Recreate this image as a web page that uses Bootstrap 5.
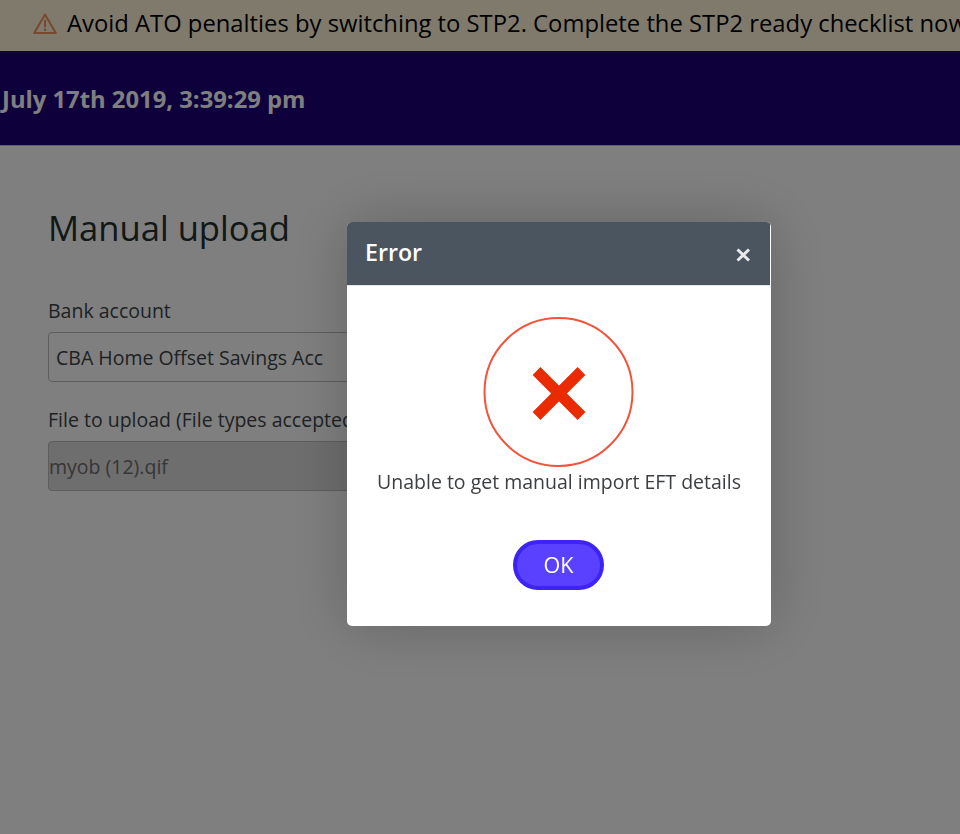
<!DOCTYPE html>
<html lang="en">
  <head>
    <meta charset="UTF-8" />
    <meta name="viewport" content="width=device-width, initial-scale=1.0" />
    <title>Manual upload</title>
    <link
      href="https://cdn.jsdelivr.net/npm/bootstrap@5.3.3/dist/css/bootstrap.min.css"
      rel="stylesheet"
    />
    <style>
      body {
        font-family: "Open Sans", sans-serif;
        color: #3d4448;
        background: #fff;
        overflow: hidden;
      }

      .stp-banner {
        height: 51px;
        background: #fff4d9;
        color: #000;
        font-size: 23.8px;
        white-space: nowrap;
        padding: 0 0 4px 33px;
        gap: 10px;
      }

      .date-bar {
        height: 95px;
        background: #1a0076;
        border-bottom: 1px solid #c8c4dc;
        color: #fff;
        font-size: 23.8px;
        font-weight: 700;
        padding: 3px 0 0 2px;
      }

      .upload-panel {
        padding: 59px 48px 0;
      }

      .upload-title {
        font-size: 34.6px;
        font-weight: 400;
        color: #24302e;
        line-height: 46px;
        margin-bottom: 47px;
      }

      .upload-label {
        font-size: 19.5px;
        line-height: 26px;
        margin-bottom: 8px;
        color: #3d4448;
        display: block;
        white-space: nowrap;
      }

      .upload-field {
        width: 600px;
        height: 50px;
        border: 1px solid #bcbcbc;
        border-radius: 4px;
        font-size: 19.5px;
        line-height: 50px;
        margin-bottom: 25px;
      }

      .upload-select {
        padding-left: 7px;
        background: #fff;
      }

      .upload-file {
        background: #dcdcdc;
        color: #6c6c6c;
        margin-bottom: 0;
      }

      .modal-backdrop.show {
        opacity: 0.5;
      }

      .error-dialog {
        width: 424px;
        max-width: 424px;
        margin: 222px 0 0 347px;
      }

      .error-content {
        height: 404px;
        border: 0;
        border-radius: 5px;
        box-shadow: 0 0 60px rgba(0, 0, 0, 0.22);
        overflow: hidden;
      }

      .error-head {
        height: 64px;
        background: #4a5560;
        border-bottom: 1px solid #e4e6e8;
        color: #fff;
        margin-right: 1px;
        padding: 0 18px 1px;
      }

      .error-title {
        font-size: 23.2px;
        font-weight: 600;
        line-height: 1;
      }

      .error-close {
        background: none;
        border: 0;
        padding: 3px 0 0;
        line-height: 0;
      }

      .error-body {
        padding-top: 31px;
      }

      .error-msg {
        font-size: 19.5px;
        line-height: 26px;
        margin: 2px 0 45px;
        color: #3c3f42;
      }

      .error-ok {
        width: 91px;
        height: 50px;
        margin-right: 1px;
        background: #5a40ff;
        border: 4px solid #3d24f5;
        border-radius: 25px;
        color: #fff;
        font-size: 21.6px;
        line-height: 1;
        padding: 0;
      }
    </style>
  </head>
  <body>
    <div class="stp-banner d-flex align-items-center">
      <svg class="flex-shrink-0" width="24" height="22" viewBox="0 0 24 22" fill="none">
        <path d="M12 1.5 L22.8 20 H1.2 Z" stroke="#f09060" stroke-width="2" stroke-linejoin="round" />
        <path d="M12 7.5 V13.5" stroke="#f09060" stroke-width="2" stroke-linecap="round" />
        <circle cx="12" cy="16.8" r="1.2" fill="#f09060" />
      </svg>
      <span>Avoid ATO penalties by switching to STP2. Complete the STP2 ready checklist now</span>
    </div>
    <div class="date-bar d-flex align-items-center">July 17th 2019, 3:39:29 pm</div>

    <div class="upload-panel">
      <h1 class="upload-title">Manual upload</h1>
      <label class="upload-label">Bank account</label>
      <div class="upload-field upload-select">CBA Home Offset Savings Acc</div>
      <label class="upload-label">File to upload (File types accepted: .qif, .ofx)</label>
      <div class="upload-field upload-file">myob (12).qif</div>
    </div>

    <div class="modal-backdrop show"></div>
    <div class="modal d-block" tabindex="-1">
      <div class="modal-dialog error-dialog">
        <div class="modal-content error-content">
          <div class="error-head d-flex align-items-center justify-content-between">
            <span class="error-title">Error</span>
            <button type="button" class="error-close" aria-label="Close">
              <svg width="17" height="16" viewBox="0 0 17 16">
                <path d="M2.5 2.5 L14 13.5 M14 2.5 L2.5 13.5" stroke="#e8eaec" stroke-width="3" />
              </svg>
            </button>
          </div>
          <div class="error-body text-center">
            <svg width="152" height="150" viewBox="0 0 152 150" class="d-block mx-auto">
              <circle cx="75.5" cy="75" r="74" fill="#fff" stroke="#f4533a" stroke-width="2" />
              <path d="M53.5 54 L98.5 99 M98.5 54 L53.5 99" stroke="#ea2a00" stroke-width="11" />
            </svg>
            <p class="error-msg">Unable to get manual import EFT details</p>
            <button type="button" class="btn error-ok">OK</button>
          </div>
        </div>
      </div>
    </div>
    <script src="https://cdn.jsdelivr.net/npm/bootstrap@5.3.3/dist/js/bootstrap.bundle.min.js"></script>
  </body>
</html>
